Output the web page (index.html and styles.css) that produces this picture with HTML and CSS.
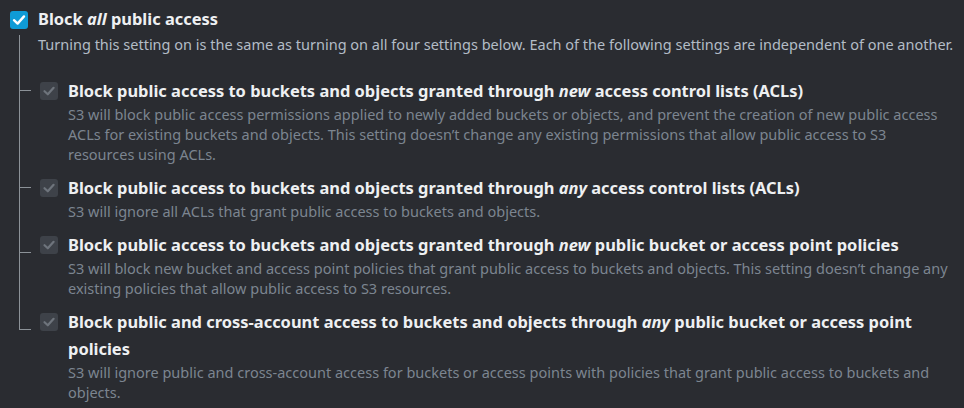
FILE: index.html
```html
<!DOCTYPE html>
<html lang="en">
<head>
<meta charset="utf-8">
<title>Block public access</title>
<link rel="stylesheet" href="styles.css">
</head>
<body>
<div class="panel">
  <div class="main">
    <span class="cb cb-on">
      <svg viewBox="0 0 18 18" width="18" height="18"><path d="M4 9.2 L7.6 12.6 L14 5.4" fill="none" stroke="#fff" stroke-width="2.4" stroke-linecap="round" stroke-linejoin="round"/></svg>
    </span>
    <div class="body">
      <div class="title">Block <i>all</i> public access</div>
      <div class="desc desc-main">Turning this setting on is the same as turning on all four settings below. Each of the following settings are independent of one another.</div>
    </div>
  </div>
  <ul class="tree">
    <li class="item b-mid">
      <span class="cb cb-dis">
        <svg viewBox="0 0 18 18" width="18" height="18"><path d="M4.5 9.2 L7.8 12.3 L13.6 5.8" fill="none" stroke="#6e747c" stroke-width="2.2" stroke-linecap="round" stroke-linejoin="round"/></svg>
      </span>
      <div class="body">
        <div class="title">Block public access to buckets and objects granted through <i>new</i> access control lists (ACLs)</div>
        <div class="desc">S3 will block public access permissions applied to newly added buckets or objects, and prevent the creation of new public access ACLs for existing buckets and objects. This setting doesn’t change any existing permissions that allow public access to S3 resources using ACLs.</div>
      </div>
    </li>
    <li class="item b-mid">
      <span class="cb cb-dis">
        <svg viewBox="0 0 18 18" width="18" height="18"><path d="M4.5 9.2 L7.8 12.3 L13.6 5.8" fill="none" stroke="#6e747c" stroke-width="2.2" stroke-linecap="round" stroke-linejoin="round"/></svg>
      </span>
      <div class="body">
        <div class="title">Block public access to buckets and objects granted through <i>any</i> access control lists (ACLs)</div>
        <div class="desc">S3 will ignore all ACLs that grant public access to buckets and objects.</div>
      </div>
    </li>
    <li class="item b-low">
      <span class="cb cb-dis">
        <svg viewBox="0 0 18 18" width="18" height="18"><path d="M4.5 9.2 L7.8 12.3 L13.6 5.8" fill="none" stroke="#6e747c" stroke-width="2.2" stroke-linecap="round" stroke-linejoin="round"/></svg>
      </span>
      <div class="body">
        <div class="title">Block public access to buckets and objects granted through <i>new</i> public bucket or access point policies</div>
        <div class="desc">S3 will block new bucket and access point policies that grant public access to buckets and objects. This setting doesn’t change any existing policies that allow public access to S3 resources.</div>
      </div>
    </li>
    <li class="item b-low last">
      <span class="cb cb-dis">
        <svg viewBox="0 0 18 18" width="18" height="18"><path d="M4.5 9.2 L7.8 12.3 L13.6 5.8" fill="none" stroke="#6e747c" stroke-width="2.2" stroke-linecap="round" stroke-linejoin="round"/></svg>
      </span>
      <div class="body">
        <div class="title">Block public and cross-account access to buckets and objects through <i>any</i> public bucket or access point policies</div>
        <div class="desc">S3 will ignore public and cross-account access for buckets or access points with policies that grant public access to buckets and objects.</div>
      </div>
    </li>
  </ul>
</div>
</body>
</html>
```

FILE: styles.css
```css
html, body {
  margin: 0;
  padding: 0;
  background: #2a2c31;
}
body {
  font-family: "Noto Sans", "Open Sans", sans-serif;
  color: #eceef0;
  width: 964px;
  height: 408px;
  overflow: hidden;
}
.panel {
  padding: 8px 10px 0 10px;
}
.main {
  display: flex;
  align-items: flex-start;
  gap: 10px;
}
.cb {
  flex: none;
  width: 18px;
  height: 18px;
  border-radius: 3px;
  display: flex;
  align-items: center;
  justify-content: center;
}
.cb svg { display: block; }
.cb-on {
  background: #0f9bd6;
  margin-top: 3px;
}
.cb-dis {
  background: #3e4249;
  margin-top: 5px;
}
.body { flex: 1; min-width: 0; }
.title {
  font-size: 16.45px;
  font-weight: 700;
  line-height: 22px;
  color: #eef0f2;
}
.title i { font-style: italic; }
.item .title { line-height: 27px; }
.desc {
  font-size: 14.5px;
  line-height: 20px;
  color: #7c8590;
}
.desc-main {
  margin-top: 4px;
  color: #b3bcc6;
}
.tree {
  list-style: none;
  margin: 0;
  padding: 23px 0 0 30px;
  position: relative;
}
.item {
  display: flex;
  align-items: flex-start;
  gap: 10px;
  position: relative;
  margin-bottom: 10px;
}
.item::before {
  content: "";
  position: absolute;
  left: -21px;
  top: 13px;
  width: 12px;
  height: 1px;
  background: #8c9298;
}
.item.b-low::before { top: 21px; }
.item::after {
  content: "";
  position: absolute;
  left: -21px;
  top: -10px;
  bottom: -10px;
  width: 1px;
  background: #8c9298;
}
.item:first-child::after { top: -42px; }
.item.last::after { bottom: auto; height: 32px; }
```
